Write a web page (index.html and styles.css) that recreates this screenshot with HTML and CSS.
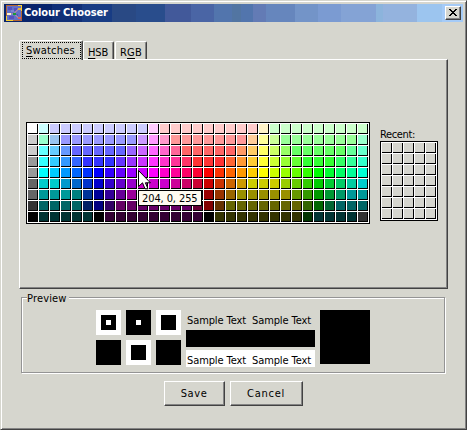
FILE: index.html
```html
<!DOCTYPE html>
<html lang="en">
<head>
<meta charset="utf-8">
<title>Colour Chooser</title>
<link rel="stylesheet" href="styles.css">
</head>
<body>
<div class="window">
  <header class="titlebar">
    <svg class="app-icon" width="16" height="16" viewBox="0 0 16 16" shape-rendering="crispEdges">
      <path fill="#b56531" d="M0 0h16v16H0z"/>
      <path fill="#f7cf31" d="M12 0h4v6h-1V1h-3zM0 11h1v4h6v1H0z"/>
      <path fill="#6371c6" d="M1 1h14v14H1z"/>
      <path fill="#5551be" d="M2 2h4v3H2zM8 3h3v3H8zM3 11h5v3H3zM9 9h3v2H9z"/>
      <path fill="#7b86d2" d="M5 5h3v2H5zM4 9h3v1H4z"/>
      <path fill="none" stroke="#9c86ad" d="M5 8.500h3l5-5M8 8.500l5 5"/>
      <path fill="#fff3ce" d="M1 8h4v2H1z"/>
      <path fill="#189a39" d="M7 8h3v2H7z"/>
      <path fill="#e7b239" d="M12 3h3v2h-3z"/>
      <path fill="#de5963" d="M12 12h3v2h-3z"/>
    </svg>
    <h1 class="title">Colour Chooser</h1>
    <button class="close" aria-label="Close">
      <svg width="8" height="7" viewBox="0 0 8 7" shape-rendering="crispEdges"><path d="M0 0h2v1h1v1h2V1h1V0h2v1H7v1H6v1H5v1h1v1h1v1h1v1H6V6H5V5H3v1H2v1H0V6h1V5h1V4h1V3H2V2H1V1H0z"/></svg>
    </button>
  </header>

  <nav class="tabs">
    <div class="tab tab-active"><span class="focus"><span class="t-swatches"><u>S</u>watches</span></span></div>
    <div class="tab"><span class="t-hsb"><u>H</u>SB</span></div>
    <div class="tab tab-rgb"><span class="t-rgb">R<u>G</u>B</span></div>
  </nav>

  <main class="panel">
    <div class="palette-wrap">
      <div class="grid palette" id="palette"></div>
      <svg class="cursor" width="13" height="21" viewBox="0 0 13 21"><path d="M.5.5v16l4-3.700 2.500 6h3l-2.600-6h5z" fill="#fff" stroke="#000"/></svg>
      <div class="tooltip"><span class="t-tip">204, 0, 255</span></div>
    </div>
    <div class="recent">
      <div class="recent-label"><span class="t-recent">Recent:</span></div>
      <div class="grid recent-grid" id="recent"></div>
    </div>
  </main>

  <section class="preview">
    <div class="legend"><span class="t-preview">Preview</span></div>
    <div class="squares">
      <i class="sq white"><i class="mid"><i class="dot"></i></i></i>
      <i class="sq"><i class="dot"></i></i>
      <i class="sq white"><i class="mid"></i></i>
      <i class="sq"></i>
      <i class="sq white"><i class="mid"></i></i>
      <i class="sq"></i>
    </div>
    <div class="samples">
      <div class="sample"><span class="t-sample">Sample Text</span><span class="t-sample">Sample Text</span></div>
      <div class="sample black"></div>
      <div class="sample white"><span class="t-sample">Sample Text</span><span class="t-sample">Sample Text</span></div>
    </div>
    <div class="big"></div>
  </section>

  <footer class="actions">
    <button class="btn save"><span class="t-save">Save</span></button>
    <button class="btn cancel"><span class="t-cancel">Cancel</span></button>
  </footer>
</div>
<script src="script.js"></script>
</body>
</html>
```
FILE: styles.css
```css
* { box-sizing: border-box; }
body { margin: 0; background: #d6d6ce; }
body, button {
  font: 11px/13px "DejaVu Sans Condensed", "DejaVu Sans", sans-serif;
  font-stretch: condensed;
  color: #000;
}
span { white-space: nowrap; }
u { text-underline-offset: 2px; text-decoration-thickness: 1px; }
.window {
  width: 467px; height: 430px; padding: 2px 1px 0 2px;
  border: 1px solid #424242;
  border-top-color: #d6d6ce; border-left-color: #d6d6ce;
  box-shadow: inset 1px 1px #fff, inset -1px -1px #848484;
  background: #d6d6ce; overflow: hidden;
}
.titlebar {
  display: flex; align-items: center; height: 18px; width: 459px;
  margin: 1px 0 0 1px; padding: 0 2px;
  background: linear-gradient(90deg,
    #08246b 48px, #102f77 48px 78px, #183c84 78px 108px,
    #294984 108px 132px, #294d8c 132px 161px, #42599a 161px 187px,
    #4a65a5 187px 210px, #5275ad 210px 228px, #5275a2 228px 237px,
    #5275ad 237px 249px, #637bb5 249px 262px, #6686bd 262px 291px,
    #7394c8 291px 314px, #7b9bd2 314px 337px, #84a3d5 337px 372px,
    #8cb4dc 372px 379px, #94b3de 379px 413px, #9cc5ef 413px 438px, #a5cbf7 438px);
}
.app-icon { flex: none; }
.title { margin: 0 auto 0 2px; font-size: 11px; line-height: 18px; font-weight: bold; letter-spacing: -.08px; color: #fff; white-space: nowrap; }
.close, .btn {
  display: flex; align-items: center; justify-content: center; padding: 0 1px 1px 0;
  background: #d6d6ce; border: 1px solid; border-color: #fff #424242 #424242 #fff;
  box-shadow: inset -1px -1px #848484;
}
.close { width: 16px; height: 14px; }
.tabs { display: flex; align-items: flex-end; height: 19px; margin: 18px 0 0 16px; }
.tab {
  width: 31px; height: 18px; padding: 4px 0 0 4px;
  border: solid; border-width: 1px 1px 0; border-color: #fff #424242 transparent #fff;
  box-shadow: inset -1px 0 #848484; border-radius: 2px 2px 0 0;
}
.tab-active { width: 64px; height: 20px; padding: 1px 0 0 2px; position: relative; background: #d6d6ce; margin-bottom: -1px; }
.tab-rgb { width: 32px; margin-left: 1px; }
.focus { display: block; width: 59px; height: 17px; padding: 1px 0 0 3px; border: 1px dotted #000; }
.t-swatches { letter-spacing: .2px; }
.t-hsb { letter-spacing: -.1px; }
.t-rgb { letter-spacing: .2px; }
.t-tip { letter-spacing: -.1px; }
.t-recent { letter-spacing: -.35px; }
.t-preview { letter-spacing: .15px; }
.t-sample { letter-spacing: -.1px; }
.t-save { letter-spacing: .6px; }
.t-cancel { letter-spacing: .75px; }
.panel {
  display: flex; width: 429px; height: 230px; margin-left: 16px; padding: 62px 0 0 6px;
  border: 1px solid; border-color: #fff #424242 #424242 #fff;
  box-shadow: inset -1px -1px #848484;
}
.palette-wrap { position: relative; width: 344px; height: 102px; }
.grid { display: grid; gap: 1px; padding: 1px; border: 1px solid #000; background: #fff; }
.palette { grid-template-columns: repeat(31, 10px); grid-auto-rows: 10px; }
.cell { border: solid #000; border-width: 0 1px 1px 0; background: #d6d6ce; }
.cursor { position: absolute; left: 112px; top: 48px; }
.tooltip {
  position: absolute; left: 112px; top: 68px; width: 64px; height: 16px;
  padding: 1px 0 0 3px; border: 1px solid #000; background: #fffbf0;
}
.recent { margin: 6px 0 0 10px; }
.recent-label { height: 13px; }
.recent-grid { grid-template-columns: repeat(5, 10px); grid-auto-rows: 10px; width: 58px; }
.preview {
  position: relative; display: flex; gap: 5px; width: 424px; height: 76px;
  margin: 8px 0 0 18px; padding: 12px 0 0 74px;
  border: 1px solid #949494; box-shadow: inset 1px 1px #fff, 1px 1px #fff;
}
.legend { position: absolute; left: 5px; top: -6px; width: 42px; height: 13px; background: #d6d6ce; }
.squares { display: grid; grid-template-columns: repeat(3, 25px); grid-auto-rows: 25px; gap: 5px; align-content: start; }
.sq, .mid { display: grid; place-content: center; background: #000; }
.mid { width: 15px; height: 15px; }
.dot { width: 5px; height: 5px; background: #fff; }
.sq.white, .white { background: #fff; }
.black { background: #000; }
.samples { display: grid; grid-template-columns: 129px; grid-auto-rows: 17px; gap: 3px; align-content: start; width: 129px; }
.sample { display: grid; grid-template-columns: 65px 63px; padding: 4px 0 0 1px; }
.big { width: 50px; height: 54px; background: #000; }
.actions { display: flex; gap: 5px; margin: 8px 0 0 161px; }
.btn { height: 25px; }
.save { width: 61px; }
.cancel { width: 73px; }
```
FILE: script.js
```js
const rows = [
  "fff cff ccf*9 fcf fcc*9 fff3c8 cfc*9",
  "ccc 9fc 99c4f0 99f*7 c9f f9f f9c f99*7 fc9 ff9 cf9 9f9*7 9fc",
  "ccc 6ff 6cf 69f 66f*5 96f c6f f6f f6c f69 f66*5 f96 fc6 ff6 cf6 9f6 6f6*5 6f9 6fc",
  "999 3ff 3cf 39f 36f 33f*3 63f 93f c3f f3f f3c f39 f36 f33*3 f63 f93 fc3 ff3 cf3 9f3 6f3 3f3*3 3f6 3f9 3fc",
  "999 0ff 0cf 09f 06f 03f 00f 30f 60f 90f c0f f0f f0c f09 f06 f03 f00 f30 f60 f90 fc0 ff0 cf0 9f0 6f0 3f0 0f0 0f3 0f6 0f9 00ffd4",
  "666 0cc*2 09c 06c 03c 00c 30c 60c 90c c0c*3 c09 c06 c03 c00 c30 c60 c90 cc0*3 9c0 6c0 3c0 0c0 0c3 0c6 00cca0 0cc",
  "666 099*3 008080 039 009 309 609 909*5 906 903 900 930 960 999000*5 690 390 090 093 096 099*2",
  "333 066*4 002066 000080 306 606*7 603 800000 630 660*7 360 060 063 066*3",
  "000 033*5 000 303*9 000 330*8 030 033*4 333"
];

function addCell(parent, colour) {
  const cell = document.createElement("i");
  cell.className = "cell";
  if (colour) cell.style.background = "#" + colour;
  parent.appendChild(cell);
}

const palette = document.getElementById("palette");
for (const row of rows) {
  for (const token of row.split(" ")) {
    const [colour, count] = token.split("*");
    for (let i = 0; i < Number(count || 1); i++) addCell(palette, colour);
  }
}

const recent = document.getElementById("recent");
for (let i = 0; i < 35; i++) addCell(recent);
```
